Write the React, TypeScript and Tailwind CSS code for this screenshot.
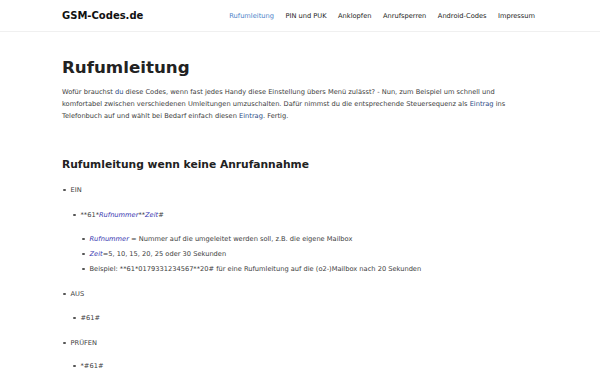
const nav = ["Rufumleitung", "PIN und PUK", "Anklopfen", "Anrufsperren", "Android-Codes", "Impressum"];

function Bullet({ children, className = "" }: { children: React.ReactNode; className?: string }) {
  return (
    <div className={"flex items-center h-[12px] " + className}>
      <span className="w-[2.5px] h-[2.5px] rounded-full bg-[#555] mr-[5px] shrink-0" />
      <span>{children}</span>
    </div>
  );
}

const Var = ({ children }: { children: React.ReactNode }) => (
  <em className="italic text-[#3636b0]">{children}</em>
);

const Link = ({ children }: { children: React.ReactNode }) => (
  <span className="text-[#2b4a86]">{children}</span>
);

export default function App() {
  return (
    <div className="min-h-[375px] bg-white text-[#3c3c3c]" style={{ fontFamily: '"DejaVu Sans", Verdana, sans-serif' }}>
      <header className="h-[32px] border-b border-[#f0f0f0]">
        <div className="mx-auto w-[476px] h-full flex items-center justify-between">
          <div className="text-[10px] font-bold text-[#111]">GSM-Codes.de</div>
          <nav className="flex gap-[11.5px] pr-[3px] text-[6.67px] text-[#222]">
            {nav.map((n, i) => (
              <span key={n} className={i === 0 ? "text-[#4a7fc8]" : ""}>{n}</span>
            ))}
          </nav>
        </div>
      </header>
      <main className="mx-auto w-[476px]">
        <h1 className="mt-[25px] text-[16.7px] leading-[20px] font-bold text-[#222]">Rufumleitung</h1>
        <p className="mt-[9px] max-w-[452px] text-[6.67px] leading-[12px]">
          Wofür brauchst <Link>du</Link> diese Codes, wenn fast jedes Handy diese Einstellung übers Menü zulässt? - Nun, zum Beispiel um schnell und komfortabel zwischen verschiedenen Umleitungen umzuschalten. Dafür nimmst du die entsprechende Steuersequenz als <Link>Eintrag</Link> ins Telefonbuch auf und wählt bei Bedarf einfach diesen <Link>Eintrag</Link>. Fertig.
        </p>
        <h2 className="mt-[36px] text-[10.7px] leading-[14px] font-bold text-[#222]">Rufumleitung wenn keine Anrufannahme</h2>
        <div className="text-[6.67px] pl-[1px]">
          <Bullet className="mt-[12px]">EIN</Bullet>
          <Bullet className="mt-[13px] ml-[10px]">**61*<Var>Rufnummer</Var>**<Var>Zeit</Var>#</Bullet>
          <Bullet className="mt-[12px] ml-[19px]"><Var>Rufnummer</Var> = Nummer auf die umgeleitet werden soll, z.B. die eigene Mailbox</Bullet>
          <Bullet className="mt-[3px] ml-[19px]"><Var>Zeit</Var>=5, 10, 15, 20, 25 oder 30 Sekunden</Bullet>
          <Bullet className="mt-[3px] ml-[19px]">Beispiel: **61*0179331234567**20# für eine Rufumleitung auf die (o2-)Mailbox nach 20 Sekunden</Bullet>
          <Bullet className="mt-[13px]">AUS</Bullet>
          <Bullet className="mt-[12px] ml-[10px]">#61#</Bullet>
          <Bullet className="mt-[13px]">PRÜFEN</Bullet>
          <Bullet className="mt-[11px] ml-[10px]">*#61#</Bullet>
        </div>
      </main>
    </div>
  );
}
